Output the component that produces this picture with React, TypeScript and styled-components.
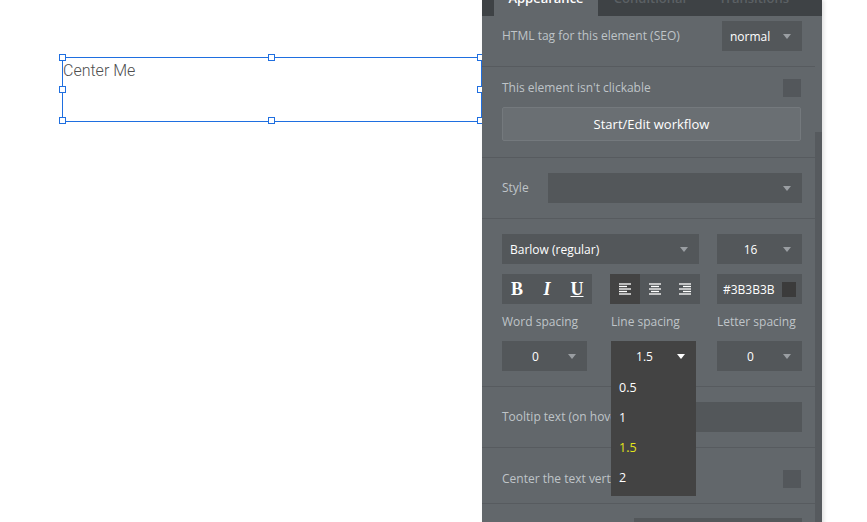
import React from 'react';
import styled, { createGlobalStyle } from 'styled-components';

const GlobalStyle = createGlobalStyle`
	html, body {
		margin: 0;
		padding: 0;
		background: #ffffff;
		overflow: hidden;
	}
	body {
		font-family: 'Open Sans', 'Liberation Sans', sans-serif;
	}
`;

const Page = styled.div`
	display: flex;
	align-items: flex-start;
	width: 867px;
	height: 522px;
	overflow: hidden;
`;

const Canvas = styled.div`
	width: 482px;
	flex-shrink: 0;
	box-sizing: border-box;
	padding: 57px 0 0 62px;
`;

const Selected = styled.div`
	position: relative;
	width: 420px;
	height: 65px;
	box-sizing: border-box;
	border: 1px solid #1f6fe0;
	padding-top: 3px;
	font-family: Roboto, 'Liberation Sans', sans-serif;
	font-size: 16px;
	font-weight: 300;
	line-height: 19px;
	color: #4f4f4f;
`;

const Handle = styled.span<{ $x: number; $y: number }>`
	position: absolute;
	left: ${({ $x }) => $x}%;
	top: ${({ $y }) => $y}%;
	width: 7px;
	height: 7px;
	box-sizing: border-box;
	margin: -4px 0 0 -4px;
	background: #ffffff;
	border: 1px solid #1f6fe0;
`;

const Panel = styled.div`
	position: relative;
	z-index: 1;
	width: 340px;
	height: 560px;
	flex-shrink: 0;
	background: #62676b;
	box-shadow: 2px 0 4px rgba(0, 0, 0, 0.12);
`;

const TabBar = styled.div`
	display: flex;
	height: 16px;
	padding-left: 12px;
	overflow: hidden;
	background: #3e4245;
`;

const Tab = styled.div<{ $active?: boolean }>`
	width: 104px;
	height: 36px;
	margin-top: -20px;
	line-height: 36px;
	text-align: center;
	font-size: 13px;
	font-weight: 600;
	color: ${({ $active }) => ($active ? '#ffffff' : '#5b6064')};
	background: ${({ $active }) => ($active ? '#62676b' : 'transparent')};
`;

const Body = styled.div`
	display: flex;
`;

const Content = styled.div`
	width: 333px;
`;

const ScrollTrack = styled.div`
	width: 7px;
	padding-top: 116px;
`;

const ScrollThumb = styled.div`
	height: 420px;
	background: #565a5e;
`;

const Section = styled.div<{ $top?: number; $bottom?: number }>`
	padding: ${({ $top = 15 }) => $top}px 13px ${({ $bottom = 15 }) => $bottom}px 20px;
	border-bottom: 1px solid #575b5f;
`;

const Row = styled.div<{ $gap?: number; $end?: boolean }>`
	display: flex;
	align-items: center;
	justify-content: ${({ $end }) => ($end ? 'flex-end' : 'space-between')};
	margin-top: ${({ $gap = 0 }) => $gap}px;
`;

const Label = styled.span<{ $width?: number }>`
	font-size: 12px;
	line-height: 18px;
	color: #bfc4c8;
	white-space: nowrap;
	${({ $width }) => ($width ? `width: ${$width}px; flex-shrink: 0;` : 'flex: 1;')}
`;

const Checkbox = styled.div`
	width: 18px;
	height: 18px;
	margin-right: 1px;
	background: #53575b;
`;

const WorkflowButton = styled.div`
	margin-top: 10px;
	width: 299px;
	height: 34px;
	box-sizing: border-box;
	border: 1px solid #74797d;
	border-radius: 2px;
	background: #6a6f73;
	color: #ffffff;
	font-size: 13px;
	display: flex;
	align-items: center;
	justify-content: center;
`;

const SelectBox = styled.div<{ $width?: number; $dark?: boolean }>`
	position: relative;
	display: flex;
	align-items: center;
	height: 30px;
	${({ $width }) => ($width ? `width: ${$width}px; flex-shrink: 0;` : 'flex: 1;')}
	background: ${({ $dark }) => ($dark ? '#434343' : '#53575a')};
`;

const SelectValue = styled.span<{ $center?: boolean }>`
	flex: 1;
	padding-left: ${({ $center }) => ($center ? 12 : 8)}px;
	text-align: ${({ $center }) => ($center ? 'center' : 'left')};
	font-size: 12px;
	color: #ffffff;
	white-space: nowrap;
`;

const Caret = styled.span<{ $light?: boolean }>`
	width: 30px;
	display: flex;
	justify-content: center;
	&::after {
		content: '';
		border-left: 4px solid transparent;
		border-right: 4px solid transparent;
		border-top: 5px solid ${({ $light }) => ($light ? '#ffffff' : '#9a9ea2')};
	}
`;

const Menu = styled.div`
	position: absolute;
	top: 100%;
	left: 0;
	z-index: 2;
	width: 100%;
	padding: 2px 0 3px;
	background: #434343;
`;

const MenuItem = styled.div<{ $selected?: boolean }>`
	height: 30px;
	line-height: 30px;
	padding-left: 8px;
	font-size: 12.5px;
	color: ${({ $selected }) => ($selected ? '#e3e61a' : '#ffffff')};
`;

const Group = styled.div`
	display: flex;
	width: 90px;
	height: 30px;
	background: #53575a;
`;

const ToolButton = styled.div<{ $active?: boolean; $serif?: 'bold' | 'italic' | 'underline' }>`
	width: 30px;
	display: flex;
	align-items: center;
	justify-content: center;
	background: ${({ $active }) => ($active ? '#434343' : 'transparent')};
	color: #ffffff;
	font-family: 'Liberation Serif', 'DejaVu Serif', serif;
	font-size: 18px;
	font-weight: 700;
	font-style: ${({ $serif }) => ($serif === 'italic' ? 'italic' : 'normal')};
	text-decoration: ${({ $serif }) => ($serif === 'underline' ? 'underline' : 'none')};
`;

const ColorField = styled.div`
	display: flex;
	align-items: center;
	justify-content: space-between;
	width: 85px;
	height: 30px;
	box-sizing: border-box;
	padding: 0 6px 0 6px;
	background: #53575a;
	font-size: 12px;
	color: #ffffff;
`;

const Swatch = styled.span<{ $color: string }>`
	width: 14px;
	height: 15px;
	background: ${({ $color }) => $color};
`;

const SpacingGrid = styled.div<{ $gap: number }>`
	display: grid;
	grid-template-columns: 109px 106px 85px;
	margin-top: ${({ $gap }) => $gap}px;
`;

const alignLines: Record<'left' | 'center' | 'right', [number, number][]> = {
	left: [[0, 12], [0, 8], [0, 12], [0, 8], [0, 12]],
	center: [[0, 12], [2, 10], [0, 12], [2, 10], [0, 12]],
	right: [[0, 12], [4, 12], [0, 12], [4, 12], [0, 12]],
};

const AlignIcon = ({ mode }: { mode: 'left' | 'center' | 'right' }) => (
	<svg width="12" height="12" viewBox="0 0 12 12">
		{alignLines[mode].map(([x1, x2], i) => (
			<line key={i} x1={x1} x2={x2} y1={1 + i * 2.5} y2={1 + i * 2.5} stroke="#ffffff" strokeWidth="1.3" />
		))}
	</svg>
);

const Select = ({
	value,
	width,
	center,
	dark,
	children,
}: {
	value: string;
	width?: number;
	center?: boolean;
	dark?: boolean;
	children?: React.ReactNode;
}) => (
	<SelectBox $width={width} $dark={dark}>
		<SelectValue $center={center}>{value}</SelectValue>
		<Caret $light={dark} />
		{children}
	</SelectBox>
);

const handles = [
	[0, 0], [50, 0], [100, 0],
	[0, 50], [100, 50],
	[0, 100], [50, 100], [100, 100],
];

const App = () => {
	return (
		<>
			<GlobalStyle />
			<Page>
				<Canvas>
					<Selected>
						Center Me
						{handles.map(([x, y]) => (
							<Handle key={`${x}-${y}`} $x={x} $y={y} />
						))}
					</Selected>
				</Canvas>
				<Panel>
					<TabBar>
						<Tab $active>Appearance</Tab>
						<Tab>Conditional</Tab>
						<Tab>Transitions</Tab>
					</TabBar>
					<Body>
						<Content>
							<Section $top={5}>
								<Row>
									<Label>HTML tag for this element (SEO)</Label>
									<Select value="normal" width={80} />
								</Row>
							</Section>
							<Section $top={12} $bottom={16}>
								<Row>
									<Label>This element isn't clickable</Label>
									<Checkbox />
								</Row>
								<WorkflowButton>Start/Edit workflow</WorkflowButton>
							</Section>
							<Section>
								<Row>
									<Label $width={46}>Style</Label>
									<Select value="" />
								</Row>
							</Section>
							<Section>
								<Row>
									<Select value="Barlow (regular)" width={197} />
									<Select value="16" width={85} center />
								</Row>
								<Row $gap={10}>
									<Group>
										<ToolButton $serif="bold">B</ToolButton>
										<ToolButton $serif="italic">I</ToolButton>
										<ToolButton $serif="underline">U</ToolButton>
									</Group>
									<Group>
										<ToolButton $active>
											<AlignIcon mode="left" />
										</ToolButton>
										<ToolButton>
											<AlignIcon mode="center" />
										</ToolButton>
										<ToolButton>
											<AlignIcon mode="right" />
										</ToolButton>
									</Group>
									<ColorField>
										#3B3B3B
										<Swatch $color="#3b3b3b" />
									</ColorField>
								</Row>
								<SpacingGrid $gap={9}>
									<Label>Word spacing</Label>
									<Label>Line spacing</Label>
									<Label>Letter spacing</Label>
								</SpacingGrid>
								<SpacingGrid $gap={10}>
									<Select value="0" width={85} center />
									<Select value="1.5" width={85} center dark>
										<Menu>
											<MenuItem>0.5</MenuItem>
											<MenuItem>1</MenuItem>
											<MenuItem $selected>1.5</MenuItem>
											<MenuItem>2</MenuItem>
										</Menu>
									</Select>
									<Select value="0" width={85} center />
								</SpacingGrid>
							</Section>
							<Section>
								<Row>
									<Label>Tooltip text (on hover)</Label>
									<SelectBox $width={168} />
								</Row>
							</Section>
							<Section $top={22}>
								<Row>
									<Label>Center the text vertically</Label>
									<Checkbox />
								</Row>
							</Section>
							<Section $top={14}>
								<Row $end>
									<SelectBox $width={168} />
								</Row>
							</Section>
						</Content>
						<ScrollTrack>
							<ScrollThumb />
						</ScrollTrack>
					</Body>
				</Panel>
			</Page>
		</>
	);
};

export default App;
